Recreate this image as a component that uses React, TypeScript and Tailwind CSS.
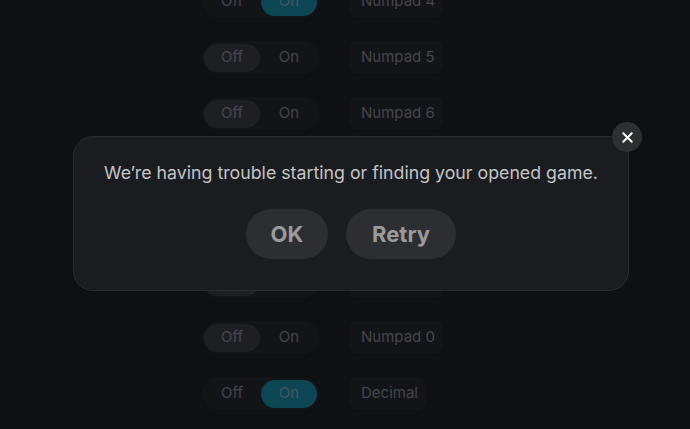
import { X } from "lucide-react";

type Row = { label: string; on: boolean };

const rows: Row[] = [
	{ label: "Numpad 4", on: true },
	{ label: "Numpad 5", on: false },
	{ label: "Numpad 6", on: false },
	{ label: "Numpad 1", on: false },
	{ label: "Numpad 2", on: false },
	{ label: "Numpad 3", on: false },
	{ label: "Numpad 0", on: false },
	{ label: "Decimal", on: true },
];

function Toggle({ on }: { on: boolean }) {
	return (
		<div className="flex h-[33px] w-[117px] items-center gap-px rounded-full bg-[#131418] p-[2px]">
			<span
				className={`flex h-[28px] w-[56px] items-center justify-center rounded-full text-[15px] ${
					on ? "text-[#43454a]" : "bg-[#1e1f23] text-[#45474c]"
				}`}
			>
				Off
			</span>
			<span
				className={`flex h-[28px] w-[56px] items-center justify-center rounded-full text-[15px] ${
					on ? "bg-[#0c4655] text-[#45585e]" : "text-[#43454a]"
				}`}
			>
				On
			</span>
		</div>
	);
}

export default function App() {
	return (
		<div
			className="relative h-[429px] w-[690px] overflow-hidden bg-[#0f1014]"
			style={{ fontFamily: "Inter, 'Noto Sans', sans-serif" }}
		>
			<div className="-mt-[15px] flex flex-col gap-[23px] pl-[202px]">
				{rows.map((row) => (
					<div key={row.label} className="flex items-center gap-[30px]">
						<Toggle on={row.on} />
						<div className="flex h-[33px] items-center rounded-lg bg-[#131418] pl-3 pr-2 text-[15px] text-[#45474c]">
							{row.label}
						</div>
					</div>
				))}
			</div>

			<div className="absolute left-[73px] top-[136px] flex h-[155px] w-[556px] flex-col items-center rounded-[20px] border border-[#2b2c30] bg-[#1b1c20] pt-[24px]">
				<p className="text-[17.75px] leading-6 text-[#c4c4c6]">
					We’re having trouble starting or finding your opened game.
				</p>
				<div className="mt-[24px] flex gap-[18px]">
					<button className="h-[50px] w-[82px] rounded-full bg-[#2d2e32] text-[22px] font-bold text-[#9b9b9d]">
						OK
					</button>
					<button className="h-[50px] w-[110px] rounded-full bg-[#2d2e32] text-[22px] font-bold text-[#9b9b9d]">
						Retry
					</button>
				</div>
			</div>

			<button className="absolute left-[612px] top-[122px] flex h-[30px] w-[30px] items-center justify-center rounded-full bg-[#2e2f33] text-white">
				<X size={17} strokeWidth={2.75} />
			</button>
		</div>
	);
}
